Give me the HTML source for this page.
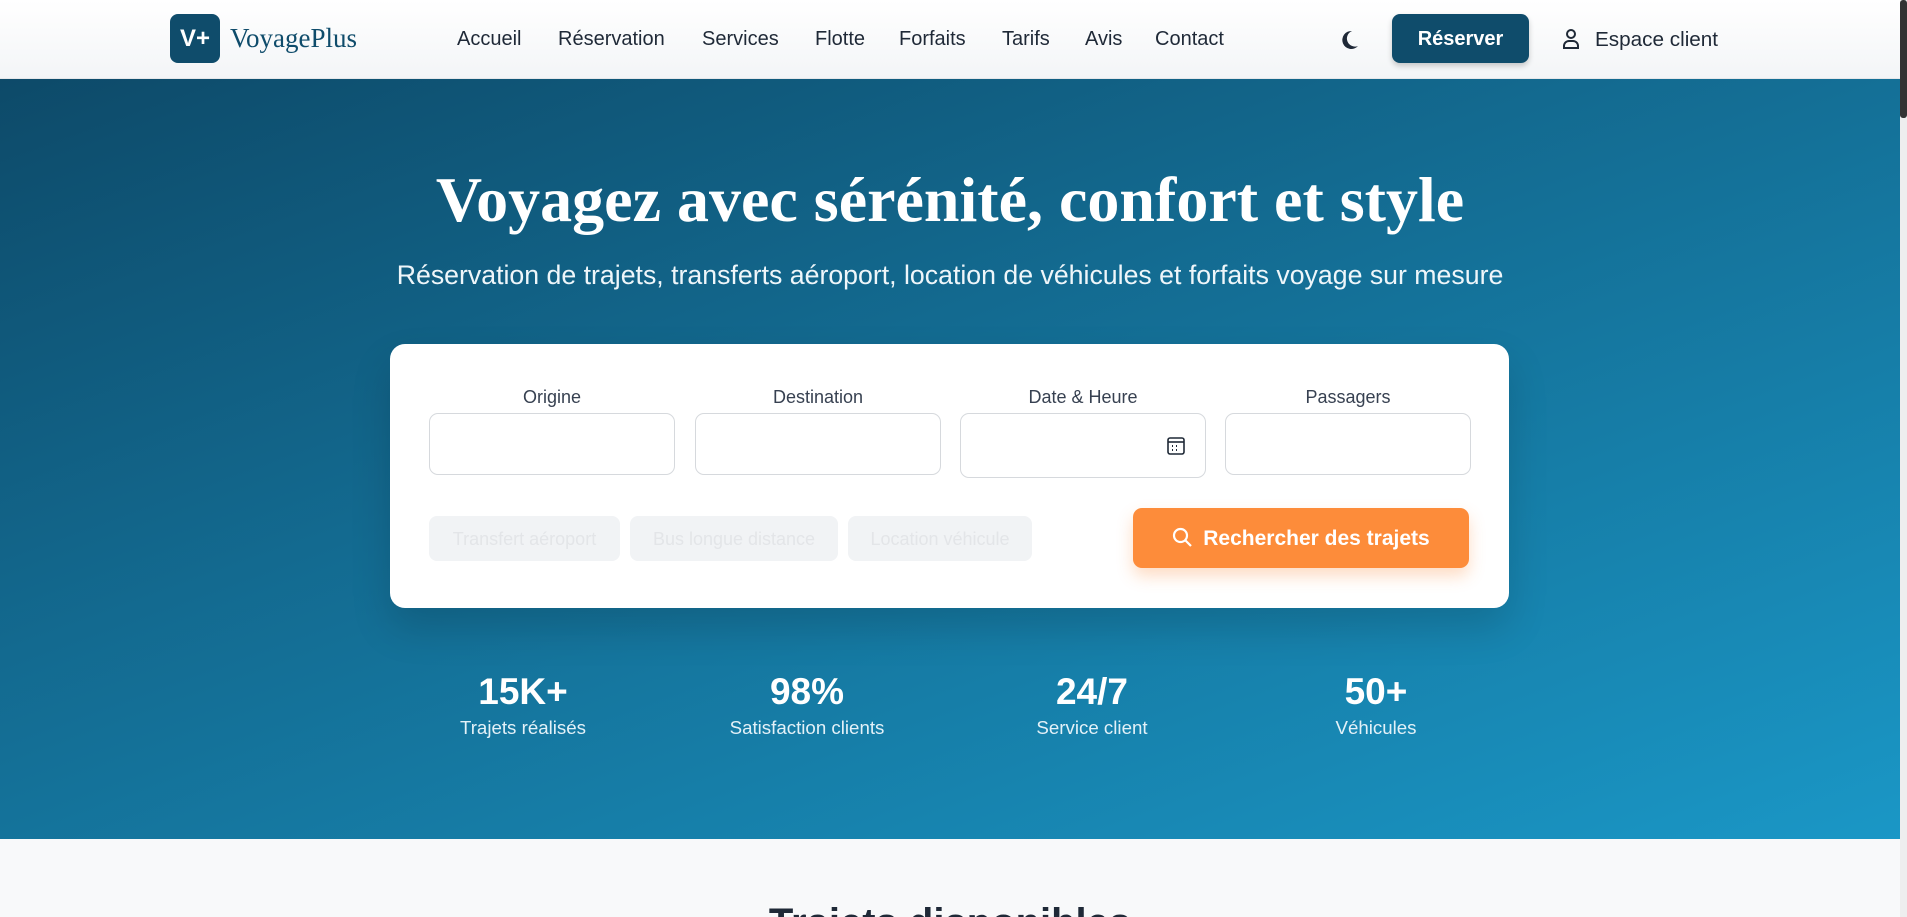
<!DOCTYPE html>
<html><head><meta charset="utf-8"><style>
*{margin:0;padding:0;box-sizing:border-box}
html,body{width:1907px;height:917px;overflow:hidden;font-family:"Liberation Sans",sans-serif}
body{position:relative;background:#f8f9fa}
.hdr{position:absolute;left:0;top:0;width:1900px;height:79px;background:linear-gradient(#fff,#f3f5f7);border-bottom:1px solid #e5e7ea}
.logo{position:absolute;left:170px;top:14px;width:50px;height:49px;background:#0f4c6b;border-radius:8px;color:#fff;font-weight:bold;font-size:24px;line-height:49px;text-align:center}
.brand{position:absolute;left:230px;top:23px;font-family:"Liberation Serif",serif;font-size:27px;color:#0f4c6b}
.nav a{position:absolute;top:28px;font-size:20px;color:#1f2937;text-decoration:none}
.btn{position:absolute;left:1392px;top:14px;width:137px;height:49px;background:#0f4c6b;border-radius:8px;color:#fff;font-weight:bold;font-size:20px;line-height:51px;text-align:center;box-shadow:0 3px 6px rgba(0,0,0,.2)}
.esp{position:absolute;left:1595px;top:28px;font-size:20.7px;color:#1f2937}
.scroll{position:absolute;right:0;top:0;width:7px;height:917px;background:#eee}
.scroll div{width:7px;height:118px;background:#333;border-radius:3px}
.hero{position:absolute;left:0;top:79px;width:1900px;height:760px;background:linear-gradient(160deg,#0d4a69 0%,#136a90 40%,#1a97c6 100%)}
h1{position:absolute;left:0;width:1900px;top:163px;text-align:center;font-family:"Liberation Serif",serif;font-weight:bold;font-size:64px;color:#fff}
.sub{position:absolute;left:0;width:1900px;top:260px;text-align:center;font-size:26.7px;color:#eef6fa}
.card{position:absolute;left:390px;top:344px;width:1119px;height:264px;background:#fff;border-radius:15px;box-shadow:0 20px 40px rgba(0,0,0,.15)}
.lbl{position:absolute;top:387px;width:246px;text-align:center;font-size:18px;color:#374151}
.inp{position:absolute;top:413px;width:246px;height:62px;border:1px solid #d6d9dd;border-radius:9px;background:#fff}
.chip{position:absolute;top:516px;height:45px;background:#f1f3f5;border-radius:8px;color:#e3e5e8;font-size:18px;line-height:46px;text-align:center}
.go{position:absolute;left:1133px;top:508px;width:336px;height:60px;background:#fd8c3a;border-radius:9px;color:#fff;font-weight:bold;font-size:21px;line-height:62px;text-align:center;box-shadow:0 8px 16px rgba(253,140,58,.3)}
.st{position:absolute;top:669px;width:300px;text-align:center;color:#fff}
.st b{display:block;font-size:37px;line-height:46px}
.st span{display:block;font-size:18.7px;color:#e3f1f8;margin-top:2px}
h2{position:absolute;left:0;width:1900px;top:901px;text-align:center;font-size:40px;color:#1f2937}
</style></head><body>
<div class="hdr">
<div class="logo">V+</div><div class="brand">VoyagePlus</div>
<div class="nav"><a style="left:457px">Accueil</a><a style="left:558px">Réservation</a><a style="left:702px">Services</a><a style="left:815px">Flotte</a><a style="left:899px">Forfaits</a><a style="left:1002px">Tarifs</a><a style="left:1085px">Avis</a><a style="left:1155px">Contact</a></div>
<svg style="position:absolute;left:1340px;top:29px" width="20" height="22" viewBox="0 0 20 22"><path d="M12 2A9 9 0 1 0 18 17 8 8 0 0 1 12 2Z" fill="#1f2937"/></svg>
<div class="btn">Réserver</div>
<svg style="position:absolute;left:1562px;top:28px" width="18" height="22" viewBox="0 0 18 22" fill="none" stroke="#1f2937" stroke-width="2"><circle cx="9" cy="6" r="4"/><path d="M2 20v-2a5 5 0 0 1 5-5h4a5 5 0 0 1 5 5v2Z"/></svg>
<div class="esp">Espace client</div>
</div>
<div class="hero"></div>
<h1>Voyagez avec sérénité, confort et style</h1>
<div class="sub">Réservation de trajets, transferts aéroport, location de véhicules et forfaits voyage sur mesure</div>
<div class="card"></div>
<div class="lbl" style="left:429px">Origine</div><div class="lbl" style="left:695px">Destination</div><div class="lbl" style="left:960px">Date &amp; Heure</div><div class="lbl" style="left:1225px">Passagers</div>
<div class="inp" style="left:429px"></div><div class="inp" style="left:695px"></div><div class="inp" style="left:960px;height:65px"></div><div class="inp" style="left:1225px"></div>
<svg style="position:absolute;left:1167px;top:436px" width="18" height="19" viewBox="0 0 18 19" fill="none" stroke="#1f2937" stroke-width="1.6"><rect x="1" y="2" width="16" height="16" rx="2"/><path d="M1 6h16"/><path d="M5 10h1M9 10h1M13 10h0M5 14h1M9 14h1" stroke-width="2"/></svg>
<div class="chip" style="left:429px;width:191px">Transfert aéroport</div>
<div class="chip" style="left:630px;width:208px">Bus longue distance</div>
<div class="chip" style="left:848px;width:184px">Location véhicule</div>
<div class="go"><svg style="vertical-align:-3px;margin-right:10px" width="21" height="21" viewBox="0 0 21 21" fill="none" stroke="#fff" stroke-width="2.2"><circle cx="8.5" cy="8.5" r="6.5"/><path d="M13.5 13.5 19 19"/></svg>Rechercher des trajets</div>
<div class="st" style="left:373px"><b>15K+</b><span>Trajets réalisés</span></div>
<div class="st" style="left:657px"><b>98%</b><span>Satisfaction clients</span></div>
<div class="st" style="left:942px"><b>24/7</b><span>Service client</span></div>
<div class="st" style="left:1226px"><b>50+</b><span>Véhicules</span></div>
<h2>Trajets disponibles</h2>
<div class="scroll"><div></div></div>
</body></html>
